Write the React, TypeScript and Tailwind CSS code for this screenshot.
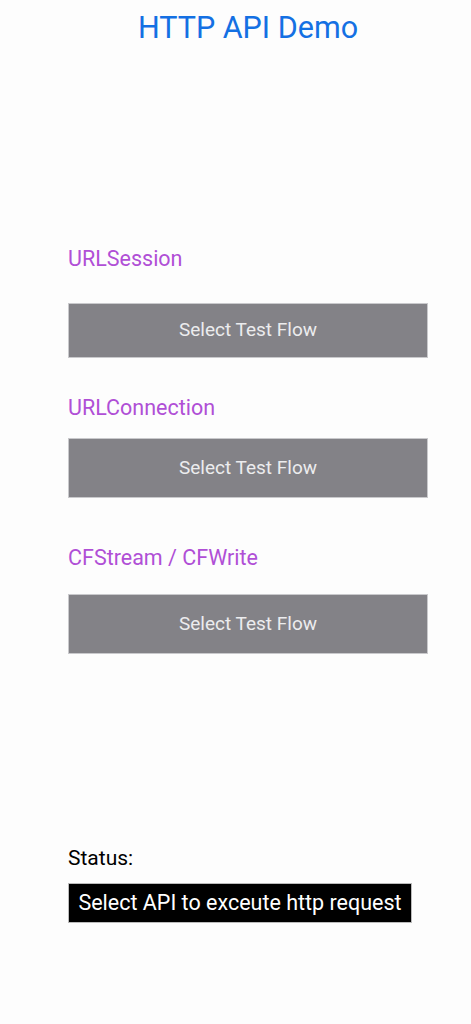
import React from "react";

const font = { fontFamily: "Roboto, 'Noto Sans', sans-serif" };

function Section({ label, labelClass, btnClass }: { label: string; labelClass: string; btnClass: string }) {
  return (
    <>
      <div className={`text-[21.5px] leading-[24px] text-[#b04fd6] ${labelClass}`}>{label}</div>
      <button className={`w-[360px] bg-[#838287] text-[#ececee] text-[19px] flex items-center justify-center border border-[#c9c9cc] ${btnClass}`}>
        Select Test Flow
      </button>
    </>
  );
}

export default function App() {
  return (
    <div className="w-[471px] h-[1024px] bg-[#fdfdfd] flex flex-col" style={font}>
      <h1 className="text-center text-[30.5px] leading-[40px] text-[#1470e3] pt-[8px] pl-[25px]">HTTP API Demo</h1>
      <div className="pl-[68px] flex flex-col">
        <Section label="URLSession" labelClass="mt-[199px]" btnClass="mt-[32px] h-[55px]" />
        <Section label="URLConnection" labelClass="mt-[38px]" btnClass="mt-[18px] h-[60px]" />
        <Section label="CFStream / CFWrite" labelClass="mt-[48px]" btnClass="mt-[24px] h-[60px]" />
        <div className="mt-[191px] text-[21px] leading-[26px] text-black">Status:</div>
        <div className="mt-[12px] w-[344px] h-[40px] bg-black text-white text-[21.5px] flex items-center justify-center border border-[#bbb]">
          Select API to exceute http request
        </div>
      </div>
    </div>
  );
}
